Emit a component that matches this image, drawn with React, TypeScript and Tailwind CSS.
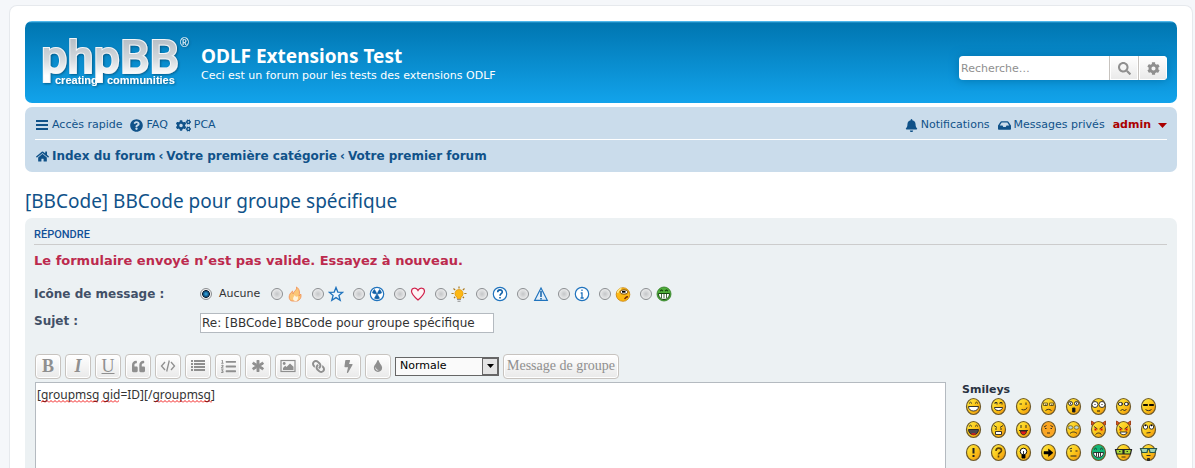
import React from 'react';
import type { ReactNode } from 'react';
import {
  FaAsterisk,
  FaBell,
  FaBolt,
  FaCog,
  FaCogs,
  FaHome,
  FaInbox,
  FaLink,
  FaListOl,
  FaQuestionCircle,
  FaQuoteLeft,
  FaSearch,
  FaTint,
} from 'react-icons/fa';

const Logo: React.FC = () => (
  <svg width="152" height="66" viewBox="0 0 152 66" className="block shrink-0 overflow-visible" role="img" aria-label="phpBB">
    <defs>
      <linearGradient id="logoFill" gradientUnits="userSpaceOnUse" x1="0" y1="9" x2="0" y2="53">
        <stop offset="0" stopColor="#b4bcc4" />
        <stop offset="0.5" stopColor="#d5dade" />
        <stop offset="0.85" stopColor="#ffffff" />
      </linearGradient>
      <filter id="logoShadow" x="-10%" y="-10%" width="120%" height="130%">
        <feDropShadow dx="1" dy="1" stdDeviation="1" floodColor="#00456b" floodOpacity="0.7" />
      </filter>
    </defs>
    <g filter="url(#logoShadow)">
      <text x="0" y="44" fontFamily="Roboto, sans-serif" fontSize="47" fontWeight="500" fill="url(#logoFill)" stroke="#f4f6f8" strokeWidth="2" paintOrder="stroke">
        phpBB
      </text>
      <text x="139" y="18" fontFamily="Liberation Sans, sans-serif" fontSize="12" fill="#fff">®</text>
      <g fontFamily="Liberation Sans, sans-serif" fontSize="11" fontWeight="700" fill="#fff">
        <text x="14" y="55">creating</text>
        <text x="66" y="55">communities</text>
      </g>
    </g>
  </svg>
);

/* Topic icons */

const topicIcons: { name: string; drawing: ReactNode }[] = [
  {
    name: 'Feu',
    drawing: (
      <>
        <path d="M9.500 1c1 3-3 4-3.300 7-1-1-1-2-.5-3-2.500 2-3.500 4-3.500 6 0 2 1 4 3 4h5c3-1 4.500-4 3.500-7l-1.700 2c1-4 .5-7-2.500-9z" fill="#fbc777" stroke="#f0935a" strokeWidth=".9" />
        <path d="M8 15c-3-1-2-4 0-6 0 2 2 2 2.500 1 1 2 .5 4-1 5z" fill="#fff3dc" />
      </>
    ),
  },
  {
    name: 'Étoile',
    drawing: <path d="M8 1.500l1.800 4.600 4.900.2-3.800 3.100 1.300 4.900L8 11.600l-4.200 2.700 1.300-4.900L1.300 6.300l4.900-.2z" fill="#eef6fd" stroke="#1f73bd" strokeWidth="1.300" />,
  },
  {
    name: 'Radioactif',
    drawing: (
      <>
        <circle cx="8" cy="8" r="6.700" fill="#fff" stroke="#1f73bd" strokeWidth="1.200" />
        <path d="M3.500 7a5 5 0 0 1 2-3.500L7.300 6.500 6.500 8zM12.500 7a5 5 0 0 0-2-3.500L8.700 6.500l.8 1.500zM5.500 12.300a5 5 0 0 0 5 0L9 9.300H7z" fill="#1161a8" stroke="#1161a8" strokeWidth=".6" />
        <circle cx="8" cy="8" r="1" fill="#1161a8" />
      </>
    ),
  },
  {
    name: 'Cœur',
    drawing: <path d="M8 14C4 10.500 1.500 8 1.500 5.200 1.500 1.700 6.300 1 8 4.500 9.700 1 14.500 1.700 14.500 5.200 14.500 8 12 10.500 8 14z" fill="#fff3f5" stroke="#d0214b" strokeWidth="1.200" />,
  },
  {
    name: 'Idée',
    drawing: (
      <>
        <path d="M8 .5v2M.5 7.500h2.200M13.300 7.500h2.200M2.500 2.500l1.700 1.600M13.500 2.500l-1.700 1.600M3 12l1.300-1.200M13 12l-1.300-1.200" stroke="#a9781d" strokeWidth="1.200" />
        <path d="M8 3.500a4 4 0 0 0-2 7.500v1.500h4V11a4 4 0 0 0-2-7.500z" fill="#fdb813" stroke="#e39a10" strokeWidth=".8" />
        <path d="M6 13.500h4M6.500 15.200h3" stroke="#8f8f8f" strokeWidth="1.100" />
      </>
    ),
  },
  {
    name: 'Question',
    drawing: (
      <>
        <circle cx="8" cy="8" r="6.700" fill="#fff" stroke="#1f73bd" strokeWidth="1.200" />
        <path d="M5.700 6.200c0-3.200 4.600-3 4.600-.3C10.300 7.700 8 7.700 8 9.800M8 11v1.600" fill="none" stroke="#1161a8" strokeWidth="1.600" />
      </>
    ),
  },
  {
    name: 'Attention',
    drawing: (
      <>
        <path d="M8 2l6.300 12.300H1.700z" fill="#e3effa" stroke="#1f73bd" strokeWidth="1.200" />
        <path d="M8 5v6M8 12v1.500" stroke="#1161a8" strokeWidth="1.500" />
      </>
    ),
  },
  {
    name: 'Information',
    drawing: (
      <>
        <circle cx="8" cy="8" r="6.700" fill="#fff" stroke="#1f73bd" strokeWidth="1.200" />
        <path d="M8 3.500v1.600M6.700 7H8v4.700M6.500 12h3.200" fill="none" stroke="#1f73bd" strokeWidth="1.300" />
      </>
    ),
  },
  {
    name: 'Clin d’œil',
    drawing: (
      <>
        <circle cx="8" cy="8.500" r="6.800" fill="#fdb813" stroke="#c77f0a" strokeWidth=".8" />
        <path d="M2.500 7a6 6 0 0 1 4-4.500" stroke="#ffe88a" strokeWidth="1.500" fill="none" />
        <ellipse cx="9" cy="6" rx="4" ry="2.200" fill="#fff" stroke="#7a4b05" strokeWidth="1" />
        <path d="M7 5.800h3.500" stroke="#000" strokeWidth="1.800" />
        <path d="M9.500 13l2-2 1.500-.3" stroke="#7a2c05" strokeWidth="1.500" fill="none" />
      </>
    ),
  },
  {
    name: 'Vert',
    drawing: (
      <>
        <circle cx="8" cy="8" r="7" fill="#4fae3a" stroke="#2d7a22" strokeWidth=".8" />
        <path d="M4 5l1.500-1L7 5M9 5l1.500-1L12 5" stroke="#14470d" strokeWidth="1.200" fill="none" />
        <path d="M2.500 7.500h11c0 8-11 8-11 0z" fill="#fff" stroke="#14470d" strokeWidth="1" />
        <path d="M5.500 7.500v4.500M8 7.500v5M10.500 7.500v4.500" stroke="#14470d" strokeWidth=".8" />
      </>
    ),
  },
];

/* Smileys, drawn on a 15x17 grid */

const dark = '#222';

const smileys: { code: string; fill?: string; features: ReactNode }[] = [
  {
    code: ':D',
    features: (
      <>
        <path d="M3 5.500l1.500-1.300L6 5.500M9 5.500l1.500-1.300L12 5.500" />
        <path d="M2.500 8.500h10c0 6-10 6-10 0z" fill="#fff" />
      </>
    ),
  },
  {
    code: ':)',
    features: (
      <>
        <path d="M4 6V4.500h2V6.500M9 6V4.500h2V6.500" />
        <path d="M3.500 9.500h8c0 4-8 4-8 0z" fill="#fff" />
      </>
    ),
  },
  { code: ';)', features: <path d="M3.500 6h2.500M10 4.500v2.500M5.500 11.500c3 1 5 0 5.500-2" /> },
  {
    code: ':(',
    features: (
      <>
        <path d="M2.500 5h4v2.500h-4zM8.500 5h4v2.500h-4z" fill="#fbe9a0" stroke="#6b5a1a" />
        <path d="M4 7h1.500M10 7h1.500" />
        <path d="M4.500 12.500c2-1.500 4-1.500 6 0" />
      </>
    ),
  },
  {
    code: ':o',
    features: (
      <>
        <circle cx="4.500" cy="5.500" r="2" fill="#fff" />
        <circle cx="10.500" cy="5.500" r="2" fill="#fff" />
        <path d="M4.500 4.500v2M10.500 4.500v2" />
        <path d="M6.500 10h2.500v4H6.500z" fill="#111" />
      </>
    ),
  },
  {
    code: ':shock:',
    features: (
      <>
        <circle cx="4" cy="6.500" r="3" fill="#fff" />
        <circle cx="11" cy="6.500" r="3" fill="#fff" />
        <path d="M3.500 6.500h1M10.500 6.500h1M6 13h3" stroke="#000" />
      </>
    ),
  },
  {
    code: ':?',
    features: (
      <>
        <ellipse cx="4.500" cy="6" rx="2.200" ry="1.600" fill="#fff" />
        <ellipse cx="10.500" cy="6" rx="2.200" ry="1.600" fill="#fff" />
        <path d="M5 6h1M11 6h1M4.500 12.500l2-1 2 1 2-1" />
      </>
    ),
  },
  {
    code: '8-)',
    features: (
      <>
        <path d="M2.500 6.500h4v1h-4zM8.500 6.500h4v1h-4z" fill="#000" stroke="#000" />
        <path d="M4.500 11.500c2 1.500 4 1.500 6 0" />
      </>
    ),
  },
  {
    code: ':lol:',
    features: (
      <>
        <path d="M3 5.500l1.500-1.300L6 5.500M9 5.500l1.500-1.300L12 5.500" />
        <path d="M2.500 8.500h10c0 7-10 7-10 0z" fill="#4b4750" />
        <path d="M5.500 13h4" stroke="#e01b1b" strokeWidth="1.500" />
      </>
    ),
  },
  {
    code: ':x',
    features: (
      <>
        <path d="M3 4.500l3 2M12 4.500l-3 2M4 8h2M9 8h2" />
        <path d="M4.500 10.500h6v3h-6z" fill="#fff" />
      </>
    ),
  },
  {
    code: ':P',
    features: (
      <>
        <path d="M5 4v3M10 4v3M3 9.500h9" />
        <path d="M4.500 10h6c0 5-6 5-6 0z" fill="#e51a1a" />
      </>
    ),
  },
  {
    code: ':oops:',
    fill: '#fba623',
    features: <path d="M3 6l2.500-1.500M9.500 4.500L12 6M4 7.500h1.500M9.500 7.500H11M6 12h3" />,
  },
  {
    code: ':cry:',
    features: (
      <>
        <ellipse cx="4.500" cy="6.500" rx="2.300" ry="1.800" fill="#bcd6d8" stroke="#806c22" />
        <ellipse cx="10.500" cy="6.500" rx="2.300" ry="1.800" fill="#bcd6d8" stroke="#806c22" />
        <path d="M4 12.500c2-2 5-2 7 0" />
      </>
    ),
  },
  {
    code: ':evil:',
    features: (
      <>
        <path d="M.5 4V0l3 2zM14.500 4V0l-3 2z" fill="#e85a1a" stroke="#9c3a10" />
        <path d="M3 5.500l3.500 2.500M12 5.500L8.500 8" />
        <path d="M3.500 8.500h2M9.500 8.500h2" stroke="#d30b0b" strokeWidth="1.800" />
        <path d="M4.500 13.500c2-2 4-2 6 0" />
      </>
    ),
  },
  {
    code: ':twisted:',
    features: (
      <>
        <path d="M.5 4V0l3 2zM14.500 4V0l-3 2z" fill="#e85a1a" stroke="#9c3a10" />
        <path d="M3 5.500l3.500 2.500M12 5.500L8.500 8" />
        <path d="M3.500 8.500h2M9.500 8.500h2" stroke="#d30b0b" strokeWidth="1.800" />
        <path d="M4 11h7c0 3.500-7 3.500-7 0z" fill="#fff" />
      </>
    ),
  },
  {
    code: ':roll:',
    features: (
      <>
        <circle cx="4.500" cy="6" r="2.200" fill="#fff" />
        <circle cx="10.500" cy="6" r="2.200" fill="#fff" />
        <path d="M4 4.500h1M10 4.500h1" stroke="#000" strokeWidth="1.500" />
        <path d="M5.500 12l4-.5" />
      </>
    ),
  },
  { code: ':!:', features: <path d="M7.500 4v5.500M7.500 11v2" strokeWidth="2" /> },
  { code: ':?:', features: <path d="M5 7c0-4 5.500-3.500 5.500-.5 0 2-3 2-3 4M7.500 11.500v2" strokeWidth="1.600" stroke="#5b4208" /> },
  {
    code: ':idea:',
    features: (
      <>
        <circle cx="7.500" cy="7.500" r="3.300" fill="#fff" stroke="#000" />
        <path d="M6 11h3v3H6z" fill="#000" stroke="#000" />
        <path d="M7.500 7v4" />
      </>
    ),
  },
  { code: ':arrow:', features: <path d="M3 7.500h4.500V5l4.500 3.700-4.500 3.700V10H3z" fill="#000" stroke="#000" strokeWidth=".5" /> },
  {
    code: ':|',
    features: (
      <>
        <path d="M4 7h2M9.500 7h2M4.500 12h6" strokeWidth="1.200" />
        <path d="M3.500 5l2.500-.8" />
      </>
    ),
  },
  {
    code: ':mrgreen:',
    fill: '#12b877',
    features: (
      <>
        <path d="M3 5.500l1.500-1.300L6 5.500M9 5.500l1.500-1.300L12 5.500" />
        <path d="M2.500 8.500h10c0 6.500-10 6.500-10 0z" fill="#fff" />
        <path d="M5.500 8.500v4M7.500 8.500v4.500M9.500 8.500v4" />
      </>
    ),
  },
  {
    code: ':geek:',
    features: (
      <>
        <path d="M-.5 5.500H7V10H.5zM8 5.500h7.500L14.500 10H8z" fill="#a8d83a" strokeWidth="1.200" />
        <path d="M3 7.500h1.500M10.500 7.500H12M5.500 13h4" />
      </>
    ),
  },
  {
    code: ':ugeek:',
    features: (
      <>
        <path d="M-.5 4.500h7.500L6 8.500H1zM8 4.500h7.500L14 8.500H9z" fill="#9fd4b4" stroke="#27564a" strokeWidth="1.200" />
        <path d="M5.500 11.500h4" />
        <path d="M6.500 14.500h2v2h-2z" fill="#333" />
      </>
    ),
  },
];

const Smiley: React.FC<{ fill?: string; children: ReactNode }> = ({ fill, children }) => (
  <svg width="15" height="17" viewBox="0 0 15 17" className="block overflow-visible" fill="none" stroke={dark} strokeWidth="0.900">
    <ellipse cx="7.500" cy="8.500" rx="7" ry="8" fill={fill || 'url(#smileyFill)'} stroke="#6d5a2c" strokeWidth="1.200" />
    {children}
  </svg>
);

/* Menu and toolbar icons */

const BarsIcon: React.FC = () => (
  <svg width="13" height="12" viewBox="0 0 13 12" fill="currentColor">
    <path d="M0 1h12v2H0zM0 5h12v2H0zM0 9h12v2H0z" />
  </svg>
);

const CaretIcon: React.FC = () => (
  <svg width="9" height="5" viewBox="0 0 9 5" fill="currentColor">
    <path d="M0 0h9L4.500 5z" />
  </svg>
);

const CodeIcon: React.FC = () => (
  <svg width="16" height="14" viewBox="0 0 16 14" fill="none" stroke="currentColor" strokeWidth="1.300">
    <path d="M5 3L1.500 7 5 11M11 3l3.500 4L11 11M9.300 1.500l-2.600 11" />
  </svg>
);

const ListIcon: React.FC = () => (
  <svg width="16" height="14" viewBox="0 0 16 14" fill="currentColor">
    <path d="M1 1h2v2H1zM1 4h2v2H1zM1 7h2v2H1zM1 10h2v2H1zM4 1h11v2H4zM4 4h11v2H4zM4 7h11v2H4zM4 10h11v2H4z" />
  </svg>
);

const ImageIcon: React.FC = () => (
  <svg width="16" height="14" viewBox="0 0 16 14">
    <rect x="1" y="1.500" width="14" height="11" fill="none" stroke="currentColor" strokeWidth="1.200" />
    <circle cx="4.200" cy="4.500" r="1.400" fill="currentColor" />
    <path d="M3 11V9l2.200-2.200L6.500 8 10 4.500l3.500 3.300V11z" fill="currentColor" />
  </svg>
);

const tools: { title: string; content: ReactNode }[] = [
  { title: 'Gras', content: <span className="font-bold">B</span> },
  { title: 'Italique', content: <span className="font-bold italic">I</span> },
  { title: 'Souligné', content: <span className="underline">U</span> },
  { title: 'Citation', content: <FaQuoteLeft size={13} /> },
  { title: 'Code', content: <CodeIcon /> },
  { title: 'Liste', content: <ListIcon /> },
  { title: 'Liste ordonnée', content: <FaListOl size={15} /> },
  { title: 'Élément de liste', content: <FaAsterisk size={12} stroke="currentColor" strokeWidth={40} /> },
  { title: 'Image', content: <ImageIcon /> },
  { title: 'Lien', content: <FaLink size={13} className="-scale-x-100" /> },
  { title: 'Flash', content: <FaBolt size={13} /> },
  { title: 'Couleur', content: <FaTint size={12} /> },
];

const buttonStyle =
  'flex h-[25px] items-center justify-center rounded border border-[#c7c3bf] bg-linear-to-b from-white to-[#e9e9e9] font-["Liberation_Serif",serif] text-[#8f8f8f] shadow-[inset_0_0_0_1px_#fff]';

const searchButtonStyle =
  'flex w-[29px] items-center justify-center border-l border-[#c7c3bf] bg-linear-to-b from-white to-[#e9e9e9] text-[#8f8f8f] shadow-[inset_0_0_0_1px_#fff]';

const radioStyle =
  'h-3 w-3 appearance-none rounded-full border border-[#8b8e91] bg-[radial-gradient(circle,#c4c6c8_0%,#e4e5e6_60%,#fff_100%)] checked:bg-[radial-gradient(circle,#3bb0e8_0%,#0c4a78_40%,#123_50%,#eee_60%)]';

const NavLink: React.FC<{ icon: ReactNode; children: ReactNode }> = ({ icon, children }) => (
  <a href="#" className="flex items-center gap-[3px]">
    {icon}
    <span>{children}</span>
  </a>
);

const Squiggle: React.FC<{ id: string; className: string }> = ({ id, className }) => (
  <svg height="3" className={className}>
    <defs>
      <pattern id={id} width="4" height="3" patternUnits="userSpaceOnUse">
        <path d="M0 2.500L2 .5 4 2.500" fill="none" stroke="#f00000" strokeWidth="0.900" />
      </pattern>
    </defs>
    <rect width="100%" height="3" fill={`url(#${id})`} />
  </svg>
);

const App: React.FC = () => {
  return (
    <div className='min-h-screen bg-[#f5f7fa] pt-[5px] pr-0.5 pl-[9px] font-["DejaVu_Sans",sans-serif] text-[11px] text-[#333]'>
      <div className="rounded-t-lg border border-b-0 border-[#e6e9ed] bg-white px-[15px] pt-[15px]">
        <header className="mb-1 flex h-[82px] items-center rounded-[7px] bg-[linear-gradient(to_bottom,#6aceff_0px,#0076b1_2px,#12a3eb_82px)] pr-2.5 pl-4 text-white">
          <a href="#">
            <Logo />
          </a>
          <div className="ml-2 flex-1 pt-1">
            <h1 className='font-["Noto_Sans",sans-serif] text-[19px] leading-6 font-bold'>ODLF Extensions Test</h1>
            <p className="leading-4">Ceci est un forum pour les tests des extensions ODLF</p>
          </div>
          <form className="mt-3 flex h-6 overflow-hidden rounded shadow-[0_0_10px_#0075b0]">
            <input type="search" aria-label="Recherche" placeholder="Recherche…" className="w-[150px] bg-white px-0.5 pt-0.5 text-[#333] placeholder:text-[#8f8f8f]" />
            <button type="button" aria-label="Rechercher" className={searchButtonStyle}>
              <FaSearch size={13} />
            </button>
            <button type="button" aria-label="Recherche avancée" className={searchButtonStyle}>
              <FaCog size={13} />
            </button>
          </form>
        </header>

        <nav className="rounded-[7px] bg-[#cadceb] px-2.5 text-[#105289]">
          <div className="flex h-8 items-center justify-between pt-1">
            <div className="flex gap-2 pl-px">
              <NavLink icon={<BarsIcon />}>Accès rapide</NavLink>
              <NavLink icon={<FaQuestionCircle size={13} />}>FAQ</NavLink>
              <NavLink icon={<FaCogs size={15} />}>PCA</NavLink>
            </div>
            <div className="flex gap-2">
              <NavLink icon={<FaBell size={13} />}>Notifications</NavLink>
              <NavLink icon={<FaInbox size={13} />}>Messages privés</NavLink>
              <a href="#" className="flex items-center gap-[7px] font-bold text-[#aa0000]">
                admin
                <CaretIcon />
              </a>
            </div>
          </div>
          <div className="flex h-[33px] items-center gap-[3px] border-t border-white pl-px text-xs font-bold">
            <NavLink icon={<FaHome size={13} />}>Index du forum</NavLink>
            <span>‹</span>
            <a href="#">Votre première catégorie</a>
            <span>‹</span>
            <a href="#">Votre premier forum</a>
          </div>
        </nav>

        <h2 className='mt-[17px] mb-[5px] font-["Noto_Sans",sans-serif] text-[19px] leading-6 text-[#105289]'>
          <a href="#">[BBCode] BBCode pour groupe spécifique</a>
        </h2>

        <form className="rounded-t-[7px] bg-[#ecf1f3] pt-2.5 pr-2.5 pl-[9px] text-[#425067]">
          <h3 className='border-b border-[#cccccc] pb-0.5 font-["Roboto",sans-serif] text-[11px] leading-[14px] font-medium text-[#115098] uppercase'>
            Répondre
          </h3>
          <p className="mt-2 text-[13px] leading-4 font-bold text-[#bc2a4d]">Le formulaire envoyé n’est pas valide. Essayez à nouveau.</p>

          <div className="mt-[17px] flex items-center">
            <span className="w-[166px] text-xs leading-4 font-bold">Icône de message :</span>
            <div className="flex gap-[9px]">
              <label className="flex items-center gap-[7px] pr-0.5 text-[#333]">
                <input type="radio" name="icon" defaultChecked className={radioStyle} />
                Aucune
              </label>
              {topicIcons.map((icon) => (
                <label key={icon.name} className="flex items-center gap-1">
                  <input type="radio" name="icon" aria-label={icon.name} className={radioStyle} />
                  <svg width="16" height="16" viewBox="0 0 16 16">
                    {icon.drawing}
                  </svg>
                </label>
              ))}
            </div>
          </div>

          <div className="mt-2.5 flex items-start">
            <label htmlFor="subject" className="w-[166px] text-xs leading-4 font-bold">
              Sujet :
            </label>
            <input id="subject" type="text" defaultValue="Re: [BBCode] BBCode pour groupe spécifique" className="h-5 w-[294px] border border-[#b4bac0] bg-white px-px text-xs text-[#333]" />
          </div>

          <div className="mt-[21px] flex items-center gap-1 pl-px">
            {tools.map((tool) => (
              <button key={tool.title} type="button" title={tool.title} aria-label={tool.title} className={`${buttonStyle} w-[26px] text-lg leading-none`}>
                {tool.content}
              </button>
            ))}
            <div className="relative flex">
              <select aria-label="Taille" defaultValue="Normale" className="h-[19px] w-[104px] appearance-none border border-[#666] bg-[#fafafa] pl-1 text-black">
                <option>Petite</option>
                <option>Normale</option>
                <option>Grande</option>
              </select>
              <span className="pointer-events-none absolute inset-y-px right-px flex w-4 items-center justify-center border border-[#666] bg-[#e4e4e4] text-black">
                <svg width="7" height="4" viewBox="0 0 7 4">
                  <path d="M0 0h7L3.500 4z" fill="currentColor" />
                </svg>
              </span>
            </div>
            <button type="button" className={`${buttonStyle} px-[3px] text-sm`}>
              Message de groupe
            </button>
          </div>

          <div className="mt-[3px] flex gap-4 pl-px">
            <div className="relative flex-1">
              <textarea
                aria-label="Message"
                spellCheck={false}
                defaultValue="[groupmsg gid=ID][/groupmsg]"
                className='block h-[86px] w-full resize-none border border-b-0 border-[#b4bac0] bg-white px-px pt-[3px] font-["Noto_Sans",sans-serif] text-xs leading-[18px] text-[#333]'
              />
              <Squiggle id="wave1" className="absolute top-[18px] left-[6px] w-[57px]" />
              <Squiggle id="wave2" className="absolute top-[18px] left-[66px] w-[18px]" />
              <Squiggle id="wave3" className="absolute top-[18px] left-[120px] w-[57px]" />
            </div>
            <aside className="w-[205px]">
              <svg width="0" height="0" className="absolute">
                <defs>
                  <linearGradient id="smileyFill" x1="0" y1="0" x2="1" y2="1">
                    <stop offset="0" stopColor="#fff04a" />
                    <stop offset="0.500" stopColor="#fcc81a" />
                    <stop offset="1" stopColor="#ee8d0c" />
                  </linearGradient>
                </defs>
              </svg>
              <strong className="block leading-4 text-[#28313f]">Smileys</strong>
              <div className="flex flex-wrap gap-x-2.5 gap-y-1.5 pl-1">
                {smileys.map((smiley) => (
                  <button key={smiley.code} type="button" aria-label={smiley.code} title={smiley.code}>
                    <Smiley fill={smiley.fill}>{smiley.features}</Smiley>
                  </button>
                ))}
              </div>
            </aside>
          </div>
        </form>
      </div>
    </div>
  );
};

export default App;
